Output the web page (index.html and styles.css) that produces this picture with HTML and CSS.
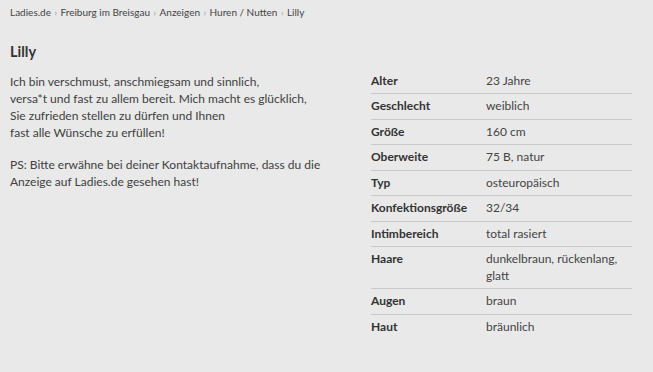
FILE: index.html
```html
<!DOCTYPE html>
<html lang="de">
<head>
<meta charset="UTF-8" />
<meta name="viewport" content="width=device-width, initial-scale=1" />
<title>Lilly - Ladies.de</title>
<link rel="stylesheet" href="styles.css">
</head>
<body>

<div class="page">
  <nav class="breadcrumb">
    <a href="#">Ladies.de</a><span class="sep">›</span><a href="#">Freiburg im Breisgau</a><span class="sep">›</span><a href="#">Anzeigen</a><span class="sep">›</span><a href="#">Huren / Nutten</a><span class="sep">›</span><span>Lilly</span>
  </nav>

  <h1 class="title">Lilly</h1>

  <div class="content">
    <div class="beschreibung">
      <p>Ich bin verschmust, anschmiegsam und sinnlich,<br>
      versa*t und fast zu allem bereit. Mich macht es glücklich,<br>
      Sie zufrieden stellen zu dürfen und Ihnen<br>
      fast alle Wünsche zu erfüllen!</p>
      <p>PS: Bitte erwähne bei deiner Kontaktaufnahme, dass du die Anzeige auf Ladies.de gesehen hast!</p>
    </div>

    <table class="details">
      <tr><th>Alter</th><td>23 Jahre</td></tr>
      <tr><th>Geschlecht</th><td>weiblich</td></tr>
      <tr><th>Größe</th><td>160 cm</td></tr>
      <tr><th>Oberweite</th><td>75 B, natur</td></tr>
      <tr><th>Typ</th><td>osteuropäisch</td></tr>
      <tr><th>Konfektionsgröße</th><td>32/34</td></tr>
      <tr><th>Intimbereich</th><td>total rasiert</td></tr>
      <tr><th>Haare</th><td>dunkelbraun, rückenlang, glatt</td></tr>
      <tr><th>Augen</th><td>braun</td></tr>
      <tr><th>Haut</th><td>bräunlich</td></tr>
    </table>
  </div>
</div>

</body>
</html>
```

FILE: styles.css
```css
body {
  margin: 0;
  background: #e9e9e9;
  font-family: Lato, "Liberation Sans", sans-serif;
  font-size: 12px;
  color: #404040;
}

.page {
  padding: 5px 10px;
}

/* Brotkrumen */
.breadcrumb {
  font-size: 10px;
  line-height: 14px;
  color: #444;
}

.breadcrumb a {
  color: #444;
  text-decoration: none;
}

.breadcrumb .sep {
  color: #999;
  margin: 0 3.5px;
  font-size: 9px;
}

.title {
  font-size: 14.5px;
  font-weight: 700;
  margin: 22px 0 0;
  line-height: 20px;
  color: #333;
}

.content {
  display: flex;
  justify-content: space-between;
  margin-top: 10.5px;
  padding-right: 11px;
}

.beschreibung {
  width: 340px;
}

.beschreibung p {
  margin: 0 0 15px;
  line-height: 17px;
}

.details {
  width: 261px;
  border-collapse: collapse;
  margin-top: -4px;
}

.details th,
.details td {
  text-align: left;
  vertical-align: top;
  padding: 4px 0;
  line-height: 16.5px;
  border-bottom: 1px solid #c9c9c9;
}

.details th {
  width: 115px;
  font-weight: 700;
  color: #333;
}

.details td {
  color: #444;
}

.details tr:last-child th,
.details tr:last-child td {
  border-bottom: none;
}
```
